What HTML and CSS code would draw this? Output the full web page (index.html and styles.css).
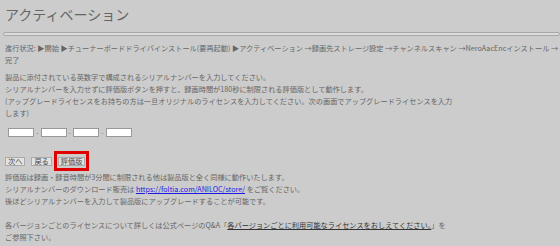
FILE: index.html
```html
<!DOCTYPE html>
<html lang="ja">
<head>
  <meta charset="UTF-8" />
  <meta name="viewport" content="width=device-width, initial-scale=1.0" />
  <title>アクティベーション</title>
  <link rel="stylesheet" href="styles.css">
</head>
<body>
  <h1 class="page-title">アクティベーション</h1>
  <div class="progress"><div class="progress-bar"></div></div>

  <p class="steps">進行状況: ▶開始 ▶チューナーボードドライバインストール(要再起動) ▶アクティベーション →録画先ストレージ設定 →チャンネルスキャン →NeroAacEncインストール →<br>完了</p>

  <p class="lead">
    製品に添付されている英数字で構成されるシリアルナンバーを入力してください。<br>
    シリアルナンバーを入力せずに評価版ボタンを押すと、録画時間が180秒に制限される評価版として動作します。<br>
    (アップグレードライセンスをお持ちの方は一旦オリジナルのライセンスを入力してください。次の画面でアップグレードライセンスを入力します)
  </p>

  <div class="serial">
    <input class="serial-box" type="text" maxlength="5" />
    <span class="sep">-</span>
    <input class="serial-box" type="text" maxlength="5" />
    <span class="sep">-</span>
    <input class="serial-box" type="text" maxlength="5" />
    <span class="sep">-</span>
    <input class="serial-box" type="text" maxlength="5" />
  </div>

  <div class="actions">
    <button class="btn">次へ</button>
    <button class="btn">戻る</button>
    <span class="highlight"><button class="btn">評価版</button></span>
  </div>

  <p class="note">
    評価版は録画・録音時間が3分間に制限される他は製品版と全く同様に動作いたします。<br>
    シリアルナンバーのダウンロード販売は <a class="link" href="https://foltia.com/ANILOC/store/">https://foltia.com/ANILOC/store/</a> をご覧ください。<br>
    後ほどシリアルナンバーを入力して製品版にアップグレードすることが可能です。
  </p>

  <p class="note">
    各バージョンごとのライセンスについて詳しくは公式ページのQ&amp;A「<a class="link-dark" href="#">各バージョンごとに利用可能なライセンスをおしえてください。</a>」を<br>ご参照下さい。
  </p>
</body>
</html>
```

FILE: styles.css
```css
html { background: #cccccc; }
body { margin: 0; padding: 4px 2px 4px 5px; font-family: "Noto Sans CJK JP", "Noto Sans", sans-serif; font-size: 7.2px; line-height: 12px; color: #666; }

.page-title { margin: 0; font-size: 14px; line-height: 20px; font-weight: normal; color: #666; }

.progress { margin: 8px -2px 0 -2px; height: 4px; box-sizing: border-box; border: 1px solid #a8a8a8; border-radius: 2px; background: #dcdcdc; }
.progress-bar { width: 0; height: 100%; }

.steps { margin: 6px 0 0; white-space: nowrap; }
.lead { margin: 5px 0 0; width: 451px; }

.serial { display: flex; align-items: center; gap: 2px; margin-top: 9px; padding-left: 3px; height: 9px; }
.serial-box { width: 26px; height: 9px; box-sizing: border-box; margin: 0; padding: 0; border: 1px solid #999; background: #fff; }
.sep { color: #888; }

.actions { display: flex; align-items: center; margin-top: 14px; }
.btn { margin: 0 6px 0 0; padding: 0 2px; height: 9px; box-sizing: border-box; border: 1px solid #aaa; background: #e2e2e2; font-family: inherit; font-size: 7.2px; line-height: 7px; color: #444; }
.highlight { display: flex; margin-left: -4px; padding: 3px 1px 2px; border: 3px solid #e00000; }
.highlight .btn { margin: 0; }

.note { margin: 0; }
.note + .note { margin-top: 12px; }
.link { color: #1a1ae6; }
.link-dark { color: #333; }
```
